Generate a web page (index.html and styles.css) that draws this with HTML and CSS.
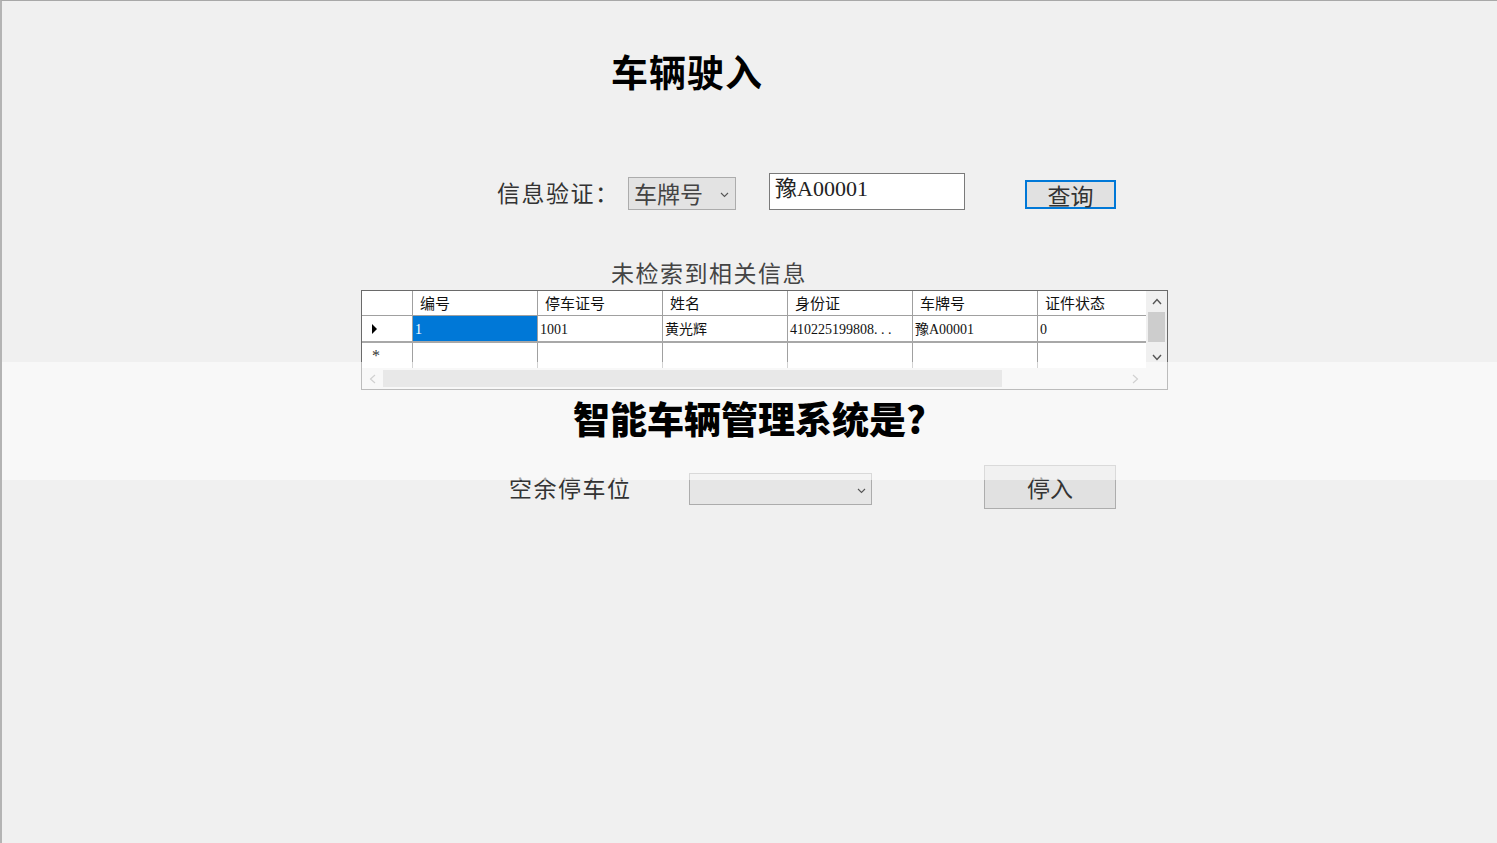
FILE: index.html
```html
<!DOCTYPE html>
<html lang="zh">
<head>
<meta charset="utf-8">
<title>车辆驶入</title>
<link rel="stylesheet" href="styles.css">
</head>
<body>
<div class="window">
  <h1 class="title">车辆驶入</h1>

  <div class="query-row">
    <span class="label label-verify">信息验证：</span>
    <div class="combo combo-type">
      <span class="combo-text">车牌号</span>
      <svg class="chev" width="9" height="6" viewBox="0 0 9 6"><polyline points="1,1 4.5,4.5 8,1" fill="none" stroke="#555" stroke-width="1.1"/></svg>
    </div>
    <div class="textbox">豫A00001</div>
    <button class="btn btn-query">查询</button>
  </div>

  <div class="status">未检索到相关信息</div>

  <div class="grid">
    <div class="grid-main">
      <div class="cells">
        <div class="row row-head">
          <div class="rh"></div>
          <div class="c">编号</div>
          <div class="c">停车证号</div>
          <div class="c">姓名</div>
          <div class="c">身份证</div>
          <div class="c">车牌号</div>
          <div class="c">证件状态</div>
        </div>
        <div class="row row-data">
          <div class="rh"><svg width="7" height="10" viewBox="0 0 7 10"><polygon points="1,0 6,5 1,10" fill="#000"/></svg></div>
          <div class="c sel">1</div>
          <div class="c">1001</div>
          <div class="c">黄光辉</div>
          <div class="c">410225199808. . .</div>
          <div class="c">豫A00001</div>
          <div class="c">0</div>
        </div>
        <div class="row row-new">
          <div class="rh"><span class="star">*</span></div>
          <div class="c"></div>
          <div class="c"></div>
          <div class="c"></div>
          <div class="c"></div>
          <div class="c"></div>
          <div class="c"></div>
        </div>
      </div>
      <div class="vscroll">
        <svg class="sarrow" width="10" height="7" viewBox="0 0 10 7"><polyline points="1,6 5,1.5 9,6" fill="none" stroke="#555" stroke-width="1.4"/></svg>
        <div class="vthumb"></div>
        <div class="vspace"></div>
        <svg class="sarrow" width="10" height="7" viewBox="0 0 10 7"><polyline points="1,1 5,5.5 9,1" fill="none" stroke="#555" stroke-width="1.4"/></svg>
      </div>
    </div>
    <div class="hscroll">
      <svg class="harrow" width="7" height="10" viewBox="0 0 7 10"><polyline points="6,1 1.5,5 6,9" fill="none" stroke="#999" stroke-width="1.2"/></svg>
      <div class="htrack"><div class="hthumb"></div></div>
      <svg class="harrow" width="7" height="10" viewBox="0 0 7 10"><polyline points="1,1 5.5,5 1,9" fill="none" stroke="#999" stroke-width="1.2"/></svg>
      <div class="corner"></div>
    </div>
  </div>

  <div class="park-row">
    <span class="label label-space">空余停车位</span>
    <div class="combo combo-space">
      <span class="combo-text"></span>
      <svg class="chev" width="9" height="6" viewBox="0 0 9 6"><polyline points="1,1 4.5,4.5 8,1" fill="none" stroke="#555" stroke-width="1.1"/></svg>
    </div>
    <button class="btn btn-park">停入</button>
  </div>

  <div class="overlay">
    <div class="overlay-text">智能车辆管理系统是?</div>
  </div>
</div>
</body>
</html>
```
FILE: styles.css
```css
* { box-sizing: border-box; }
html, body { margin: 0; padding: 0; }
body {
  background: #f0f0f0;
  font-family: "Liberation Serif", "Noto Sans CJK SC", serif;
  color: #222;
}
.window {
  position: relative;
  width: 1497px;
  height: 843px;
  border-top: 1px solid #a8a8a8;
  border-left: 2px solid #b4b4b4;
  background: #f0f0f0;
  overflow: hidden;
}
.title {
  margin: 50px 0 0 609px;
  font-family: "Noto Sans CJK SC", sans-serif;
  font-size: 37px;
  line-height: 40px;
  font-weight: 700;
  color: #000;
  letter-spacing: 1px;
}
.query-row {
  margin-top: 82px;
  height: 37px;
  display: flex;
  align-items: center;
  padding-left: 495px;
}
.label {
  font-family: "Noto Sans CJK SC", sans-serif;
  font-size: 23px;
  color: #333;
  line-height: 28px;
  letter-spacing: 1.5px;
}
.label-verify { width: 131px; }
.combo {
  display: flex;
  align-items: center;
  justify-content: space-between;
  background: #e3e3e3;
  border: 1px solid #acacac;
}
.combo-type { width: 108px; height: 33px; padding: 0 6px 0 5px; margin-top: 3px; }
.combo-text {
  font-family: "Noto Sans CJK SC", sans-serif;
  font-size: 23px;
  color: #444;
  line-height: 28px;
}
.chev { margin-top: 3px; }
.textbox {
  margin-left: 33px;
  width: 196px;
  height: 37px;
  background: #fff;
  border: 1px solid #7a7a7a;
  font-family: "Liberation Serif", "Noto Sans CJK SC", serif;
  font-size: 22px;
  line-height: 30px;
  padding: 0 0 0 5px;
  color: #222;
}
.btn {
  font-family: "Noto Sans CJK SC", sans-serif;
  font-size: 23px;
  color: #333;
  background: #e1e1e1;
  border: 1px solid #adadad;
  padding: 0;
  line-height: 26px;
}
.btn-query {
  margin-left: 60px;
  margin-top: 6px;
  width: 91px;
  height: 29px;
  border: 2px solid #0078d7;
  line-height: 24px;
}
.status {
  margin: 48px 0 0 609px;
  font-family: "Noto Sans CJK SC", sans-serif;
  font-size: 23px;
  line-height: 28px;
  color: #444;
  letter-spacing: 1.5px;
}
.grid {
  margin: 4px 0 0 359px;
  width: 807px;
  height: 100px;
  border: 1px solid #6a6a6a;
  background: #fff;
  display: flex;
  flex-direction: column;
}
.grid-main { display: flex; height: 77px; }
.cells { width: 784px; overflow: hidden; }
.row { display: flex; white-space: nowrap; }
.rh {
  flex: 0 0 51px;
  border-right: 1px solid #a0a0a0;
  display: flex;
  align-items: center;
  padding-left: 9px;
}
.c {
  flex: 0 0 125px;
  border-right: 1px solid #a0a0a0;
  overflow: hidden;
}
.row-head { height: 25px; border-bottom: 1px solid #a0a0a0; }
.row-head .c {
  font-family: "Noto Sans CJK SC", sans-serif;
  font-size: 15px;
  line-height: 24px;
  padding-left: 7px;
  color: #111;
}
.row-data { height: 27px; border-bottom: 2px solid #a8a8a8; }
.row-data .c {
  font-family: "Liberation Serif", "Noto Sans CJK SC", serif;
  font-size: 14px;
  line-height: 28px;
  padding-left: 2px;
  color: #111;
}
.row-data .c.sel { background: #0078d7; color: #fff; }
.row-new { height: 25px; }
.star { font-size: 16px; line-height: 34px; color: #333; padding-left: 1px; }
.vscroll {
  width: 21px;
  background: #f0f0f0;
  display: flex;
  flex-direction: column;
  align-items: center;
}
.sarrow { margin: 7px 0 7px; flex: 0 0 auto; }
.vthumb { width: 17px; height: 30px; background: #cdcdcd; }
.vspace { flex: 1; }
.hscroll {
  height: 21px;
  display: flex;
  align-items: center;
  background: #f0f0f0;
}
.harrow { margin: 0 7px 0 7px; flex: 0 0 auto; }
.htrack { width: 748px; height: 17px; }
.hthumb { width: 619px; height: 17px; background: #cdcdcd; }
.corner { width: 21px; height: 21px; background: #f0f0f0; margin-left: auto; }
.park-row {
  margin-top: 75px;
  height: 44px;
  display: flex;
  align-items: center;
  padding-left: 507px;
}
.label-space { width: 180px; }
.combo-space { width: 183px; height: 32px; padding: 0 5px; margin-top: 4px; background: #e6e6e6; }
.btn-park {
  margin-left: 112px;
  width: 132px;
  height: 44px;
}
.overlay {
  position: absolute;
  left: -2px;
  top: 361px;
  width: 1497px;
  height: 118px;
  background: rgba(255, 255, 255, 0.55);
  display: flex;
  align-items: center;
  justify-content: center;
}
.overlay-text {
  font-family: "Noto Sans CJK SC", sans-serif;
  font-size: 37px;
  font-weight: 900;
  color: #000;
  margin-left: 2px;
  margin-top: -6px;
}
```
